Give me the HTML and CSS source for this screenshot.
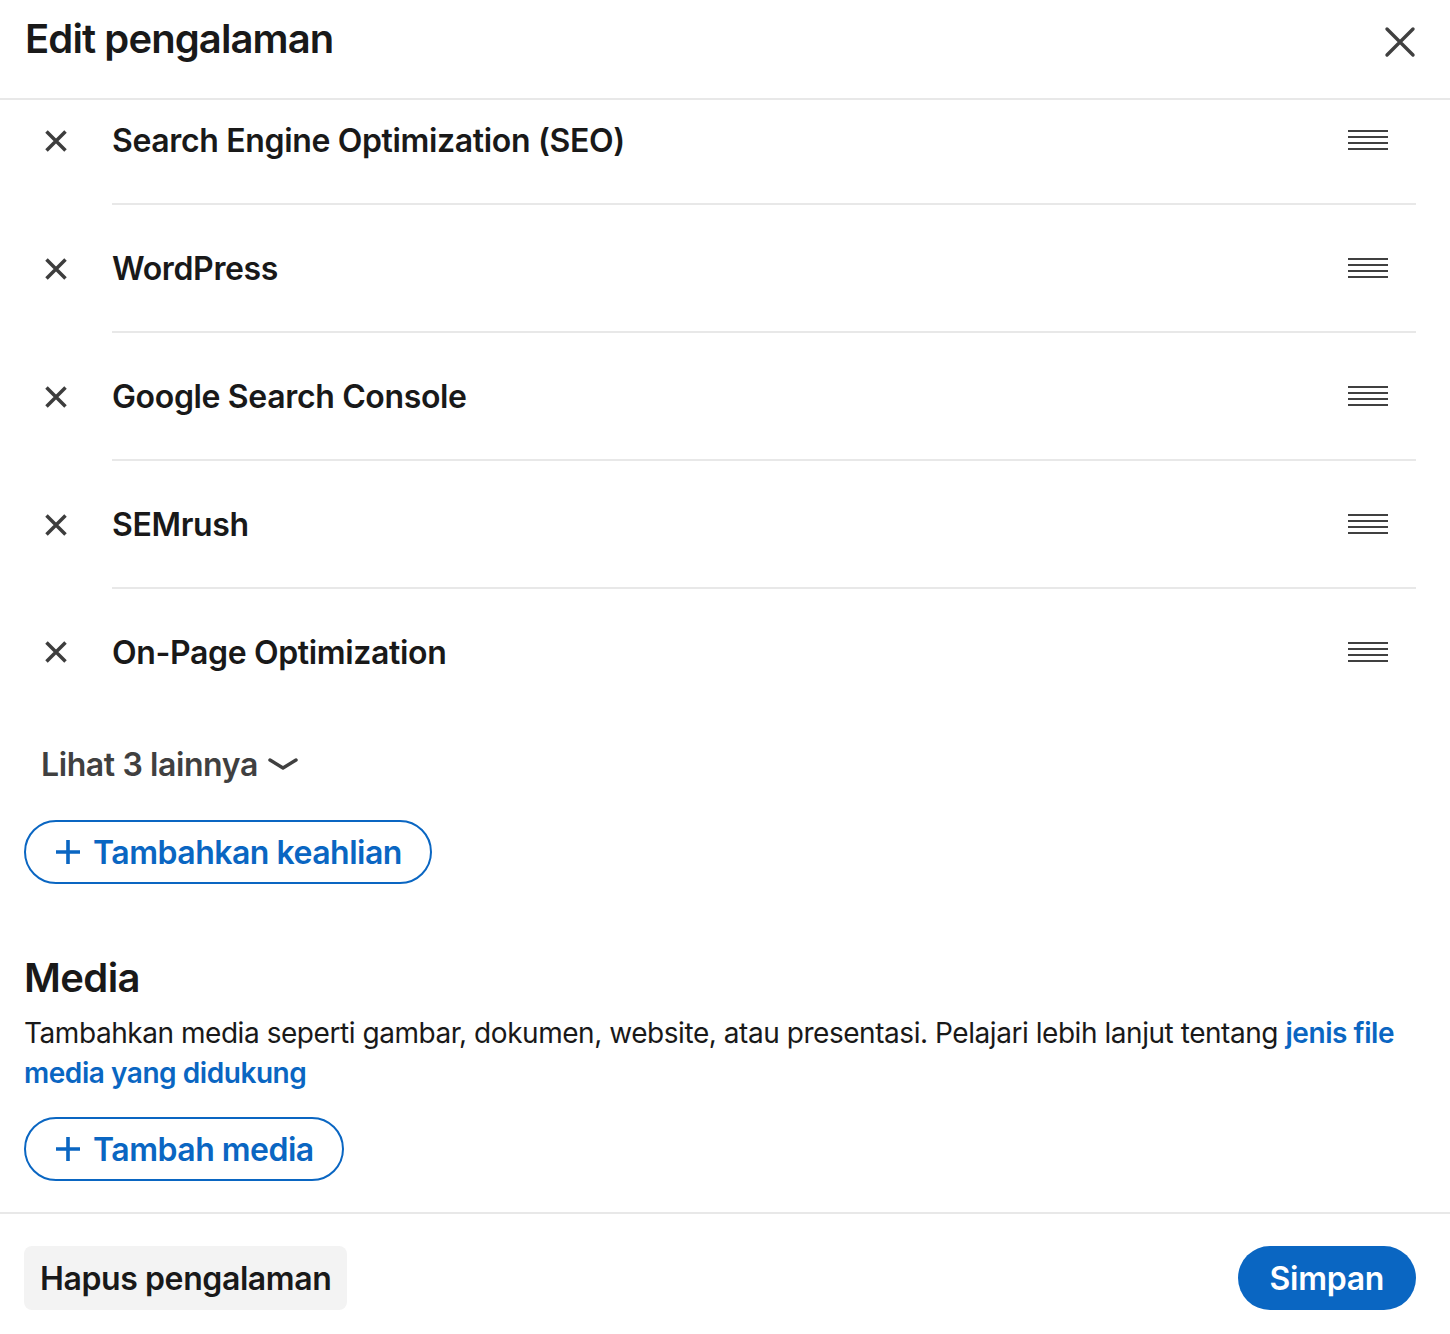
FILE: index.html
```html
<!DOCTYPE html>
<html lang="id">
<head>
  <meta charset="UTF-8">
  <title>Edit pengalaman</title>
  <link rel="stylesheet" href="styles.css">
</head>
<body>
  <div class="modal">
    <!-- Kopfzeile mit Titel und Schliessen-Knopf -->
    <header class="modal-header">
      <h2 class="modal-title">Edit pengalaman</h2>
      <button class="icon-btn close-btn" aria-label="Tutup">
        <svg width="32" height="32" viewBox="0 0 32 32"><path d="M3 3L29 29M29 3L3 29" stroke="#404040" stroke-width="3.4" stroke-linecap="round" fill="none"/></svg>
      </button>
    </header>

    <div class="modal-body">
      <div class="scroll-content">
        <ul class="skill-list">
          <li class="skill">
            <button class="icon-btn remove-btn" aria-label="Hapus">
              <svg width="24" height="24" viewBox="0 0 24 24"><path d="M2.5 2.5L21.5 21.5M21.5 2.5L2.5 21.5" stroke="#3d3d3d" stroke-width="3.5" fill="none"/></svg>
            </button>
            <div class="skill-main">
              <span class="skill-name">Search Engine Optimization (SEO)</span>
              <span class="drag-handle"></span>
            </div>
          </li>
          <li class="skill">
            <button class="icon-btn remove-btn" aria-label="Hapus">
              <svg width="24" height="24" viewBox="0 0 24 24"><path d="M2.5 2.5L21.5 21.5M21.5 2.5L2.5 21.5" stroke="#3d3d3d" stroke-width="3.5" fill="none"/></svg>
            </button>
            <div class="skill-main">
              <span class="skill-name">WordPress</span>
              <span class="drag-handle"></span>
            </div>
          </li>
          <li class="skill">
            <button class="icon-btn remove-btn" aria-label="Hapus">
              <svg width="24" height="24" viewBox="0 0 24 24"><path d="M2.5 2.5L21.5 21.5M21.5 2.5L2.5 21.5" stroke="#3d3d3d" stroke-width="3.5" fill="none"/></svg>
            </button>
            <div class="skill-main">
              <span class="skill-name">Google Search Console</span>
              <span class="drag-handle"></span>
            </div>
          </li>
          <li class="skill">
            <button class="icon-btn remove-btn" aria-label="Hapus">
              <svg width="24" height="24" viewBox="0 0 24 24"><path d="M2.5 2.5L21.5 21.5M21.5 2.5L2.5 21.5" stroke="#3d3d3d" stroke-width="3.5" fill="none"/></svg>
            </button>
            <div class="skill-main">
              <span class="skill-name">SEMrush</span>
              <span class="drag-handle"></span>
            </div>
          </li>
          <li class="skill">
            <button class="icon-btn remove-btn" aria-label="Hapus">
              <svg width="24" height="24" viewBox="0 0 24 24"><path d="M2.5 2.5L21.5 21.5M21.5 2.5L2.5 21.5" stroke="#3d3d3d" stroke-width="3.5" fill="none"/></svg>
            </button>
            <div class="skill-main">
              <span class="skill-name">On-Page Optimization</span>
              <span class="drag-handle"></span>
            </div>
          </li>
        </ul>

        <button class="show-more">
          Lihat 3 lainnya
          <svg width="30" height="16" viewBox="0 0 30 16"><path d="M2 4L15 12L28 4" stroke="#404040" stroke-width="3.4" stroke-linecap="round" stroke-linejoin="round" fill="none"/></svg>
        </button>

        <button class="outline-btn add-skill">
          <svg width="26" height="26" viewBox="0 0 26 26"><path d="M13 1V25M1 13H25" stroke="#0a66c2" stroke-width="3.6" fill="none"/></svg>
          Tambahkan keahlian
        </button>

        <!-- Bereich für Medien -->
        <section class="media">
          <h3 class="section-title">Media</h3>
          <p class="section-text">Tambahkan media seperti gambar, dokumen, website, atau presentasi. Pelajari lebih lanjut tentang <a href="#" class="link">jenis file media yang didukung</a></p>
          <button class="outline-btn add-media">
            <svg width="26" height="26" viewBox="0 0 26 26"><path d="M13 1V25M1 13H25" stroke="#0a66c2" stroke-width="3.6" fill="none"/></svg>
            Tambah media
          </button>
        </section>
      </div>
    </div>

    <footer class="modal-footer">
      <button class="tertiary-btn">Hapus pengalaman</button>
      <button class="primary-btn">Simpan</button>
    </footer>
  </div>
</body>
</html>
```

FILE: styles.css
```css
/* Grundlegendes Reset */
html, body {
  margin: 0;
  padding: 0;
  background: #fff;
  font-family: Inter, "Noto Sans", sans-serif;
  color: #191919;
}

button {
  font-family: inherit;
  border: none;
  background: none;
  padding: 0;
  cursor: pointer;
}

.modal {
  width: 1450px;
  height: 1334px;
  display: flex;
  flex-direction: column;
  overflow: hidden;
}

/* Kopfzeile */
.modal-header {
  display: flex;
  justify-content: space-between;
  align-items: flex-start;
  padding: 15px 34px 0 25px;
  height: 83px;
  border-bottom: 2px solid #e8e8e8;
}

.modal-title {
  margin: 0;
  font-size: 40px;
  line-height: 48px;
  font-weight: 600;
  letter-spacing: -0.9px;
}

.close-btn {
  margin-top: 11px;
  display: flex;
}

.icon-btn svg {
  display: block;
}

/* Inhalt, etwas nach unten gescrollt */
.modal-body {
  flex: 1;
  overflow: hidden;
  padding: 0 34px 0 24px;
}

.scroll-content {
  margin-top: -23px;
}

.skill-list {
  list-style: none;
  margin: 0;
  padding: 0;
}

.skill {
  display: flex;
  align-items: stretch;
}

.remove-btn {
  width: 88px;
  flex: none;
  display: flex;
  align-items: center;
  padding-left: 20px;
}

.skill-main {
  flex: 1;
  height: 126px;
  display: flex;
  align-items: center;
  justify-content: space-between;
  border-bottom: 2px solid #e8e8e8;
  padding-right: 28px;
}

.skill:last-child .skill-main {
  border-bottom: none;
}

.skill-name {
  font-size: 32px;
  font-weight: 600;
  letter-spacing: -0.35px;
}

/* Ziehgriff: vier dünne Linien */
.drag-handle {
  width: 40px;
  height: 20px;
  background: repeating-linear-gradient(to bottom, #404040 0, #404040 2px, transparent 2px, transparent 6px);
}

.show-more {
  display: flex;
  align-items: center;
  gap: 10px;
  margin-top: 17px;
  height: 64px;
  padding: 0 17px;
  font-size: 32px;
  font-weight: 600;
  color: #404040;
  letter-spacing: -0.4px;
}

.outline-btn {
  display: flex;
  align-items: center;
  gap: 12px;
  height: 64px;
  box-sizing: border-box;
  padding: 0 28px 0 29px;
  border: 2px solid #0a66c2;
  border-radius: 32px;
  color: #0a66c2;
  font-size: 32px;
  font-weight: 600;
  letter-spacing: -0.5px;
}

.add-skill {
  margin-top: 24px;
}

/* Medien-Abschnitt */
.media {
  margin-top: 70px;
}

.section-title {
  margin: 0;
  font-size: 40px;
  line-height: 48px;
  font-weight: 600;
  letter-spacing: -0.6px;
}

.section-text {
  margin: 11px 0 0;
  font-size: 28px;
  line-height: 40px;
  color: #191919;
  letter-spacing: -0.45px;
}

.link {
  color: #0a66c2;
  font-weight: 600;
  text-decoration: none;
}

.add-media {
  margin-top: 24px;
}

/* Fusszeile */
.modal-footer {
  display: flex;
  justify-content: space-between;
  padding: 32px 34px 24px 24px;
  border-top: 2px solid #e8e8e8;
}

.tertiary-btn {
  height: 64px;
  padding: 0 16px;
  background: #f3f3f3;
  border-radius: 8px;
  font-size: 32px;
  font-weight: 600;
  color: #191919;
  letter-spacing: -0.4px;
}

.primary-btn {
  height: 64px;
  padding: 0 32px;
  background: #0a66c2;
  border-radius: 32px;
  font-size: 32px;
  font-weight: 600;
  color: #fff;
  letter-spacing: -0.3px;
}
```
